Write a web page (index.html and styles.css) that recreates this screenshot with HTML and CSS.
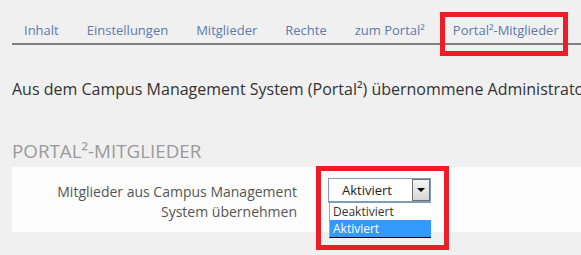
FILE: index.html
```html
<!DOCTYPE html>
<html lang="de">
<head>
<meta charset="utf-8">
<title>Portal²-Mitglieder</title>
<link rel="stylesheet" href="styles.css">
</head>
<body>
<nav class="tabs">
  <a class="tab">Inhalt</a>
  <a class="tab">Einstellungen</a>
  <a class="tab">Mitglieder</a>
  <a class="tab">Rechte</a>
  <a class="tab">zum Portal²</a>
  <a class="tab tab-active">Portal²-Mitglieder<span class="mark mark-tab"></span></a>
</nav>
<p class="intro">Aus dem Campus Management System (Portal²) übernommene Administratoren</p>
<h2 class="section-title">PORTAL²-MITGLIEDER</h2>
<div class="panel">
  <label class="field-label">Mitglieder aus Campus Management System übernehmen</label>
  <div class="select-wrap">
    <div class="select">
      <span class="select-value">Aktiviert</span>
      <span class="select-btn"><span class="arrow"></span></span>
    </div>
    <ul class="options">
      <li class="option">Deaktiviert</li>
      <li class="option option-selected">Aktiviert</li>
    </ul>
    <span class="mark mark-select"></span>
  </div>
</div>
</body>
</html>
```
FILE: styles.css
```css
html, body {
  margin: 0;
  padding: 0;
  background: #f0f0f0;
  font-family: "Open Sans", "Liberation Sans", sans-serif;
  overflow: hidden;
}
body {
  width: 581px;
  height: 255px;
  padding-left: 12px;
  box-sizing: border-box;
}
.tabs {
  display: flex;
  gap: 28px;
  padding: 21px 0 0 12px;
  border-bottom: 2px solid #808080;
  height: 22px;
}
.tab {
  position: relative;
  color: #5d7aaf;
  font-size: 13px;
  line-height: 18px;
  white-space: nowrap;
}
.mark {
  position: absolute;
  border: 5px solid #ee1c25;
  pointer-events: none;
}
.mark-tab {
  left: -13px;
  right: -9px;
  top: -9px;
  bottom: -13px;
}
.intro {
  margin: 34px 0 0;
  font-size: 16px;
  line-height: 20px;
  color: #333;
  white-space: nowrap;
}
.section-title {
  margin: 39px 0 0;
  font-size: 18.8px;
  line-height: 26px;
  font-weight: 400;
  color: #9a9a9a;
}
.panel {
  margin-top: 3px;
  background: #fdfdfd;
  height: 65px;
  display: flex;
  align-items: flex-start;
  gap: 31px;
}
.field-label {
  width: 262px;
  margin-left: 23px;
  margin-top: 15px;
  text-align: right;
  font-size: 14px;
  line-height: 20px;
  color: #555;
}
.select-wrap {
  position: relative;
  margin-top: 11px;
  width: 103px;
}
.select {
  height: 25px;
  box-sizing: border-box;
  border: 1px solid #7f9db9;
  border-bottom-width: 2px;
  background: #fff;
  display: flex;
  align-items: center;
  justify-content: space-between;
}
.select-value {
  padding-left: 13px;
  font-size: 13px;
  color: #222;
}
.select-btn {
  width: 18px;
  height: 22px;
  box-sizing: border-box;
  border: 1px solid #6e6e6e;
  background: linear-gradient(#f4f4f4, #d6d6d6);
  display: flex;
  align-items: center;
  justify-content: center;
  align-self: flex-start;
}
.arrow {
  width: 0;
  height: 0;
  border-left: 4px solid transparent;
  border-right: 4px solid transparent;
  border-top: 4px solid #000;
}
.options {
  list-style: none;
  margin: 0 0 0 1px;
  padding: 0;
  background: #fff;
  border-left: 1px solid #a8a8a8;
  border-bottom: 1px solid #000;
}
.option {
  height: 17px;
  line-height: 17px;
  padding-left: 3px;
  font-size: 12px;
  color: #333;
}
.option-selected {
  background: #3399ff;
  color: #fff;
}
.mark-select {
  left: -12px;
  right: -18px;
  top: -12px;
  bottom: -12px;
}
```
